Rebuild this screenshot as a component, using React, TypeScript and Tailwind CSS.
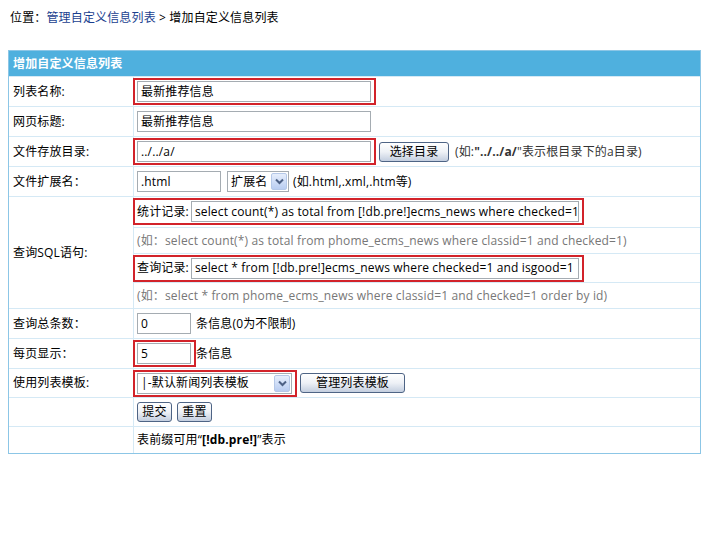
import React from "react";

const font = {
  fontFamily: '"Open Sans", "Noto Sans CJK SC", sans-serif',
};

function RedBox({ children, className = "" }: { children: React.ReactNode; className?: string }) {
  return (
    <div className={`flex items-center border-2 border-[#d2232a] -ml-[4px] pl-[2px] pr-[3px] py-[1px] ${className}`}>
      {children}
    </div>
  );
}

function TextInput({ value, w, className = "" }: { value: string; w: string; className?: string }) {
  return (
    <div
      className={`h-[21px] border border-[#a5acb2] bg-white flex items-center px-[3px] overflow-hidden whitespace-nowrap text-[12px] text-black ${w} ${className}`}
    >
      {value}
    </div>
  );
}

function Arrow() {
  return (
    <div className="w-[16px] h-[17px] mr-[1px] rounded-[2px] border border-[#b5c8e8] bg-gradient-to-b from-[#e6eefc] to-[#b9cdf1] flex items-center justify-center">
      <svg width="9" height="7" viewBox="0 0 9 7">
        <path d="M1 1.5 L4.5 5 L8 1.5" fill="none" stroke="#4d6185" strokeWidth="2" />
      </svg>
    </div>
  );
}

function Select({ value, w }: { value: string; w: string }) {
  return (
    <div className={`h-[21px] border border-[#a5acb2] bg-white flex items-center justify-between pl-[3px] text-[12px] ${w}`}>
      <span className="whitespace-nowrap">{value}</span>
      <Arrow />
    </div>
  );
}

function Btn({ children, w }: { children: React.ReactNode; w: string }) {
  return (
    <div
      className={`h-[20px] ${w} rounded-[3px] border border-[#4e6485] bg-gradient-to-b from-[#ffffff] via-[#eef1f6] to-[#c3cedf] flex items-center justify-center text-[12px] text-black`}
    >
      {children}
    </div>
  );
}

function Row({ label, h, children }: { label: string; h: string; children: React.ReactNode }) {
  return (
    <div className={`flex border-t border-[#d5e9f5] ${h}`}>
      <div className="w-[125px] shrink-0 border-r border-[#d5e9f5] flex items-center pl-[4px] text-[12px]">
        {label}
      </div>
      <div className="flex-1 flex items-center pl-[3px] text-[12px]">{children}</div>
    </div>
  );
}

export default function App() {
  return (
    <div className="w-[718px] h-[535px] bg-white text-black tracking-[0.15px]" style={font}>
      <div className="pt-[10px] pl-[10px] text-[12px] leading-[16px]">
        位置：<span className="text-[#1b3f8f]">管理自定义信息列表</span> &gt; 增加自定义信息列表
      </div>
      <div className="mt-[24px] ml-[8px] w-[693px] border border-[#8cc6e6]">
        <div className="h-[25px] bg-[#4fb0de] flex items-center pl-[4px] text-[12px] font-bold text-white">
          增加自定义信息列表
        </div>
        <Row label="列表名称:" h="h-[30px]">
          <RedBox>
            <TextInput value="最新推荐信息" w="w-[234px]" />
          </RedBox>
        </Row>
        <Row label="网页标题:" h="h-[30px]">
          <TextInput value="最新推荐信息" w="w-[234px]" />
        </Row>
        <Row label="文件存放目录:" h="h-[30px]">
          <RedBox>
            <TextInput value="../../a/" w="w-[234px]" />
          </RedBox>
          <div className="ml-[3px]">
            <Btn w="w-[70px]">选择目录</Btn>
          </div>
          <span className="ml-[6px] text-[#333]">
            (如:<b>"../../a/</b>"表示根目录下的a目录)
          </span>
        </Row>
        <Row label="文件扩展名：" h="h-[30px]">
          <TextInput value=".html" w="w-[84px]" />
          <div className="ml-[6px]">
            <Select value="扩展名" w="w-[62px]" />
          </div>
          <span className="ml-[4px]">(如.html,.xml,.htm等)</span>
        </Row>
        <div className="flex border-t border-[#d5e9f5] h-[112px]">
          <div className="w-[125px] shrink-0 border-r border-[#d5e9f5] flex items-center pl-[4px] text-[12px]">
            查询SQL语句:
          </div>
          <div className="flex-1 flex flex-col text-[12px]">
            <div className="h-[30px] flex items-center pl-[3px]">
              <RedBox>
                <span className="whitespace-nowrap mr-[2px]">统计记录:</span>
                <TextInput
                  value="select count(*) as total from [!db.pre!]ecms_news where checked=1"
                  w="w-[388px]"
                />
              </RedBox>
            </div>
            <div className="h-[27px] border-t border-[#d5e9f5] flex items-center pl-[3px] text-[#777] whitespace-nowrap">
              (如：select count(*) as total from phome_ecms_news where classid=1 and checked=1)
            </div>
            <div className="h-[29px] border-t border-[#d5e9f5] flex items-center pl-[3px]">
              <RedBox>
                <span className="whitespace-nowrap mr-[2px]">查询记录:</span>
                <TextInput
                  value="select * from [!db.pre!]ecms_news where checked=1 and isgood=1"
                  w="w-[388px]"
                />
              </RedBox>
            </div>
            <div className="h-[26px] border-t border-[#d5e9f5] flex items-center pl-[3px] text-[#777] whitespace-nowrap">
              (如：select * from phome_ecms_news where classid=1 and checked=1 order by id)
            </div>
          </div>
        </div>
        <Row label="查询总条数：" h="h-[30px]">
          <TextInput value="0" w="w-[54px]" />
          <span className="ml-[5px]">条信息(0为不限制)</span>
        </Row>
        <Row label="每页显示：" h="h-[30px]">
          <RedBox>
            <TextInput value="5" w="w-[54px]" />
          </RedBox>
          <span>条信息</span>
        </Row>
        <Row label="使用列表模板:" h="h-[29px]">
          <RedBox>
            <Select value="|-默认新闻列表模板" w="w-[155px]" />
          </RedBox>
          <div className="ml-[3px]">
            <Btn w="w-[105px]">管理列表模板</Btn>
          </div>
        </Row>
        <Row label="" h="h-[29px]">
          <Btn w="w-[35px]">提交</Btn>
          <div className="ml-[5px]">
            <Btn w="w-[35px]">重置</Btn>
          </div>
        </Row>
        <Row label="" h="h-[27px]">
          <span>
            表前缀可用“<b>[!db.pre!]</b>”表示
          </span>
        </Row>
      </div>
    </div>
  );
}
